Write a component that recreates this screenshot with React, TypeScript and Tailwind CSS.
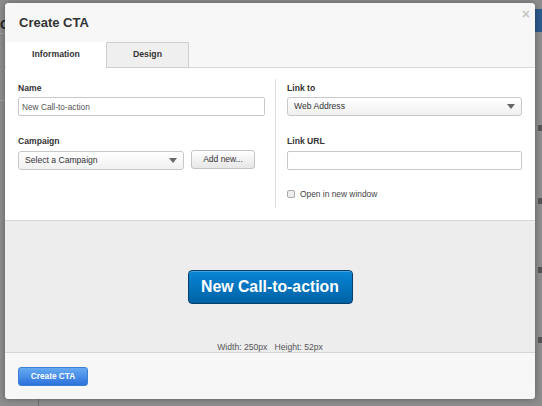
import { useState } from "react";

function Caret() {
  return (
    <svg width="8" height="5" viewBox="0 0 8 5" className="shrink-0">
      <path d="M0 0h8L4 5z" fill="#666" />
    </svg>
  );
}

function SelectBox({ value, className }: { value: string; className: string }) {
  return (
    <div
      className={`flex h-[19px] items-center justify-between rounded-[3px] border border-[#c8c8c8] bg-gradient-to-b from-white to-[#f0f0f0] pl-[6px] pr-[6px] text-[8.6px] text-[#333] ${className}`}
    >
      <span>{value}</span>
      <Caret />
    </div>
  );
}

export default function App() {
  const [tab, setTab] = useState<"info" | "design">("info");
  const [name, setName] = useState("New Call-to-action");
  const [url, setUrl] = useState("");
  const [newWindow, setNewWindow] = useState(false);

  return (
    <div
      className="relative h-[406px] w-[542px] overflow-hidden bg-[#8d8d8d]"
      style={{ fontFamily: '"Liberation Sans", Arial, sans-serif' }}
    >
      {/* page behind the overlay */}
      <div className="absolute left-0 top-[15px] text-[13px] font-bold text-[#222]">C</div>
      <div className="absolute left-0 top-[33px] h-px w-[6px] bg-[#a0a0a0]" />
      <div className="absolute left-0 top-[100px] h-px w-[6px] bg-[#a0a0a0]" />
      <div className="absolute bottom-0 left-[38px] top-[399px] w-px bg-[#6f6f6f]" />
      <div className="absolute right-0 top-[9px] h-[23px] w-[8px] bg-[#2b5a8c]" />
      <div className="absolute right-0 top-[125px] h-[6px] w-[4px] bg-[#555]" />
      <div className="absolute right-0 top-[198px] h-[6px] w-[4px] bg-[#555]" />
      <div className="absolute right-0 top-[267px] h-[6px] w-[4px] bg-[#555]" />
      <div className="absolute right-0 top-[337px] h-[6px] w-[4px] bg-[#555]" />

      {/* modal */}
      <div className="absolute left-[5px] top-[3px] flex h-[396px] w-[530px] flex-col overflow-hidden rounded-[4px] bg-white shadow-[0_0_6px_rgba(0,0,0,0.35)]">
        <div className="relative flex flex-col bg-[#f7f7f7]">
          <div className="flex h-[39px] items-center pl-[14px] text-[13px] font-bold text-[#333]">
            Create CTA
          </div>
          <button className="absolute right-[5px] top-[4px] text-[14px] font-bold leading-none text-[#c8c8c8]">
            ×
          </button>
          <div className="flex h-[26px] items-end border-b border-[#d8d8d8] pl-px">
            <button
              onClick={() => setTab("info")}
              className={`-mb-px flex h-[26px] w-[100px] items-center justify-center text-[8.7px] font-bold text-[#333] ${
                tab === "info" ? "bg-white" : "border border-[#cfcfcf] bg-[#efefef]"
              }`}
            >
              Information
            </button>
            <button
              onClick={() => setTab("design")}
              className={`-mb-px flex h-[26px] w-[83px] items-center justify-center border-x border-t text-[8.7px] font-bold text-[#333] ${
                tab === "design"
                  ? "border-[#d8d8d8] bg-white"
                  : "border-[#cfcfcf] border-b bg-[#efefef]"
              }`}
            >
              Design
            </button>
          </div>
        </div>

        <div className="flex h-[153px] border-b border-[#d6d6d6] bg-white">
          <div className="flex w-[270px] flex-col pl-[13px] pr-[4px] pt-[14px]">
            <label className="h-[12px] text-[8.6px] font-bold leading-[12px] text-[#333]">Name</label>
            <input
              value={name}
              onChange={(e) => setName(e.target.value)}
              className="mt-[3px] h-[19px] w-[247px] rounded-[2px] border border-[#c8c8c8] px-[3px] text-[8.3px] text-[#555] outline-none"
            />
            <label className="mt-[19px] h-[12px] text-[8.6px] font-bold leading-[12px] text-[#333]">
              Campaign
            </label>
            <div className="mt-[4px] flex items-center gap-[7px]">
              <SelectBox value="Select a Campaign" className="w-[166px]" />
              <button className="-mt-[2px] h-[19px] w-[64px] rounded-[3px] border border-[#c4c4c4] bg-gradient-to-b from-white to-[#e6e6e6] text-[8.5px] text-[#333]">
                Add new...
              </button>
            </div>
          </div>
          <div className="mb-[12px] mt-[11px] w-px bg-[#dedede]" />
          <div className="flex flex-1 flex-col pl-[11px] pt-[14px]">
            <label className="h-[12px] text-[8.6px] font-bold leading-[12px] text-[#333]">Link to</label>
            <SelectBox value="Web Address" className="mt-[3px] w-[235px]" />
            <label className="mt-[19px] h-[12px] text-[8.6px] font-bold leading-[12px] text-[#333]">
              Link URL
            </label>
            <input
              value={url}
              onChange={(e) => setUrl(e.target.value)}
              className="mt-[4px] h-[19px] w-[235px] rounded-[2px] border border-[#c8c8c8] px-[3px] text-[8.5px] outline-none"
            />
            <label className="mt-[18px] flex h-[12px] items-center gap-[5px] text-[8.4px] leading-[12px] text-[#444]">
              <input
                type="checkbox"
                checked={newWindow}
                onChange={(e) => setNewWindow(e.target.checked)}
                className="h-[8px] w-[8px] appearance-none rounded-[2px] border border-[#aaa] bg-[#eee]"
              />
              Open in new window
            </label>
          </div>
        </div>

        <div className="flex h-[132px] flex-col items-center border-b border-[#d6d6d6] bg-[#ededed]">
          <button className="mt-[49px] flex h-[34px] w-[165px] items-center justify-center rounded-[4px] border border-[#0b3f6b] bg-gradient-to-b from-[#0a86d6] to-[#0062a6] text-[15.8px] font-bold text-white shadow-[inset_0_1px_0_rgba(255,255,255,0.25)]">
            New Call-to-action
          </button>
          <div className="mt-auto text-[8.6px] leading-[10px] text-[#555]">
            Width: 250px&nbsp;&nbsp;&nbsp;Height: 52px
          </div>
        </div>

        <div className="flex flex-1 items-start bg-[#f7f7f7] pl-[13px] pt-[14px]">
          <button className="h-[19px] w-[70px] rounded-[3px] border border-[#3c7fd6] bg-gradient-to-b from-[#66aaf2] to-[#2c72dc] text-[8.3px] font-bold text-white">
            Create CTA
          </button>
        </div>
      </div>
    </div>
  );
}
